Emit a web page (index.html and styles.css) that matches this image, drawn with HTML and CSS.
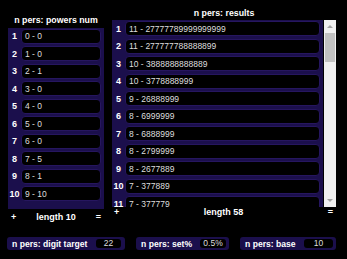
FILE: index.html
```html
<!DOCTYPE html>
<html lang="en">
<head>
<meta charset="UTF-8">
<title>n pers</title>
<link rel="stylesheet" href="styles.css">
</head>
<body>
<div class="lists">
    <section class="col col-left">
        <h2 class="title">n pers: powers num</h2>
        <div class="panel">
            <div class="row"><span class="idx">1</span><span class="item">0 - 0</span></div>
            <div class="row"><span class="idx">2</span><span class="item">1 - 0</span></div>
            <div class="row"><span class="idx">3</span><span class="item">2 - 1</span></div>
            <div class="row"><span class="idx">4</span><span class="item">3 - 0</span></div>
            <div class="row"><span class="idx">5</span><span class="item">4 - 0</span></div>
            <div class="row"><span class="idx">6</span><span class="item">5 - 0</span></div>
            <div class="row"><span class="idx">7</span><span class="item">6 - 0</span></div>
            <div class="row"><span class="idx">8</span><span class="item">7 - 5</span></div>
            <div class="row"><span class="idx">9</span><span class="item">8 - 1</span></div>
            <div class="row"><span class="idx">10</span><span class="item">9 - 10</span></div>
        </div>
        <div class="foot"><span>+</span><span>length 10</span><span>=</span></div>
    </section>
    <section class="col col-right">
        <h2 class="title">n pers: results</h2>
        <div class="list-wrap">
            <div class="panel">
                <div class="row"><span class="idx">1</span><span class="item">11 - 27777789999999999</span></div>
                <div class="row"><span class="idx">2</span><span class="item">11 - 277777788888899</span></div>
                <div class="row"><span class="idx">3</span><span class="item">10 - 3888888888889</span></div>
                <div class="row"><span class="idx">4</span><span class="item">10 - 3778888999</span></div>
                <div class="row"><span class="idx">5</span><span class="item">9 - 26888999</span></div>
                <div class="row"><span class="idx">6</span><span class="item">8 - 6999999</span></div>
                <div class="row"><span class="idx">7</span><span class="item">8 - 6888999</span></div>
                <div class="row"><span class="idx">8</span><span class="item">8 - 2799999</span></div>
                <div class="row"><span class="idx">9</span><span class="item">8 - 2677889</span></div>
                <div class="row"><span class="idx">10</span><span class="item">7 - 377889</span></div>
                <div class="row"><span class="idx">11</span><span class="item">7 - 377779</span></div>
            </div>
            <div class="scrollbar">
                <div class="arrow arrow-up"></div>
                <div class="thumb"></div>
                <div class="arrow arrow-down"></div>
            </div>
        </div>
        <div class="foot"><span>+</span><span>length 58</span><span>=</span></div>
    </section>
</div>
<div class="controls">
    <div class="ctl ctl-target"><span class="ctl-label">n pers: digit target</span><span class="ctl-value">22</span></div>
    <div class="ctl ctl-set"><span class="ctl-label">n pers: set%</span><span class="ctl-value">0.5%</span></div>
    <div class="ctl ctl-base"><span class="ctl-label">n pers: base</span><span class="ctl-value">10</span></div>
</div>
</body>
</html>
```

FILE: styles.css
```css
body {
    margin: 0;
    width: 347px;
    height: 259px;
    overflow: hidden;
    background: #000;
    color: #fff;
    font-family: "Liberation Sans", Arial, sans-serif;
}
.lists {
    display: flex;
    align-items: flex-start;
    gap: 8px;
    padding-left: 8px;
    height: 223px;
}
.col-left {
    width: 96px;
    padding-top: 14px;
}
.col-right {
    width: 224px;
    padding-top: 7px;
}
.title {
    margin: 0;
    font-size: 8.8px;
    font-weight: bold;
    line-height: 12px;
    text-align: center;
}
.col-left .title {
    margin-bottom: 2px;
}
.col-right .title {
    margin-bottom: 1px;
}
.panel {
    box-sizing: border-box;
    background-color: #1b0f4c;
    padding: 0.5px 3px 0 0;
    overflow: hidden;
}
.col-left .panel {
    height: 181px;
}
.list-wrap {
    display: flex;
    gap: 1px;
    height: 187px;
}
.list-wrap .panel {
    flex: 1;
    padding-top: 1px;
}
.row {
    display: flex;
    align-items: center;
    height: 15px;
    margin-bottom: 2.5px;
}
.idx {
    width: 13px;
    flex: none;
    text-align: center;
    font-size: 9px;
    font-weight: bold;
}
.item {
    flex: 1;
    height: 100%;
    box-sizing: border-box;
    display: flex;
    align-items: center;
    padding-left: 3px;
    background: #000;
    border: 1px solid #26165f;
    border-radius: 4px;
    color: #dedede;
    font-size: 8.5px;
    white-space: nowrap;
}
.scrollbar {
    width: 12px;
    display: flex;
    flex-direction: column;
    background: #f0f0f0;
}
.arrow {
    height: 12px;
    position: relative;
}
.arrow::after {
    content: "";
    position: absolute;
    left: 3px;
    width: 0;
    height: 0;
    border-left: 3px solid transparent;
    border-right: 3px solid transparent;
}
.arrow-up::after {
    top: 5px;
    border-bottom: 3px solid #a3a3a3;
}
.arrow-down {
    margin-top: auto;
}
.arrow-down::after {
    top: 4px;
    border-top: 3px solid #a3a3a3;
}
.thumb {
    height: 29px;
    margin: 1px 1px 0;
    background: #c1c1c1;
}
.foot {
    display: flex;
    justify-content: space-between;
    font-size: 9px;
    font-weight: bold;
    line-height: 11px;
    padding: 0 3px;
}
.col-left .foot {
    margin-top: 3px;
}
.col-right .foot {
    padding-left: 2px;
}
.controls {
    display: flex;
    gap: 11px;
    padding-left: 7px;
    margin-top: 14px;
}
.ctl {
    display: flex;
    align-items: center;
    box-sizing: border-box;
    height: 13px;
    padding: 0 3px 0 5px;
    background: #1b0f4c;
    border-radius: 3px;
}
.ctl-target {
    width: 118px;
    padding-right: 4px;
}
.ctl-set {
    width: 93px;
}
.ctl-base {
    width: 96px;
}
.ctl-label {
    font-size: 8.6px;
    font-weight: bold;
    white-space: nowrap;
}
.ctl-value {
    margin-left: auto;
    height: 9px;
    line-height: 9px;
    background: #000;
    border-radius: 3px;
    color: #dedede;
    font-size: 8.5px;
    text-align: center;
}
.ctl-target .ctl-value {
    width: 25px;
}
.ctl-set .ctl-value {
    width: 26px;
}
.ctl-base .ctl-value {
    width: 29px;
}
```
